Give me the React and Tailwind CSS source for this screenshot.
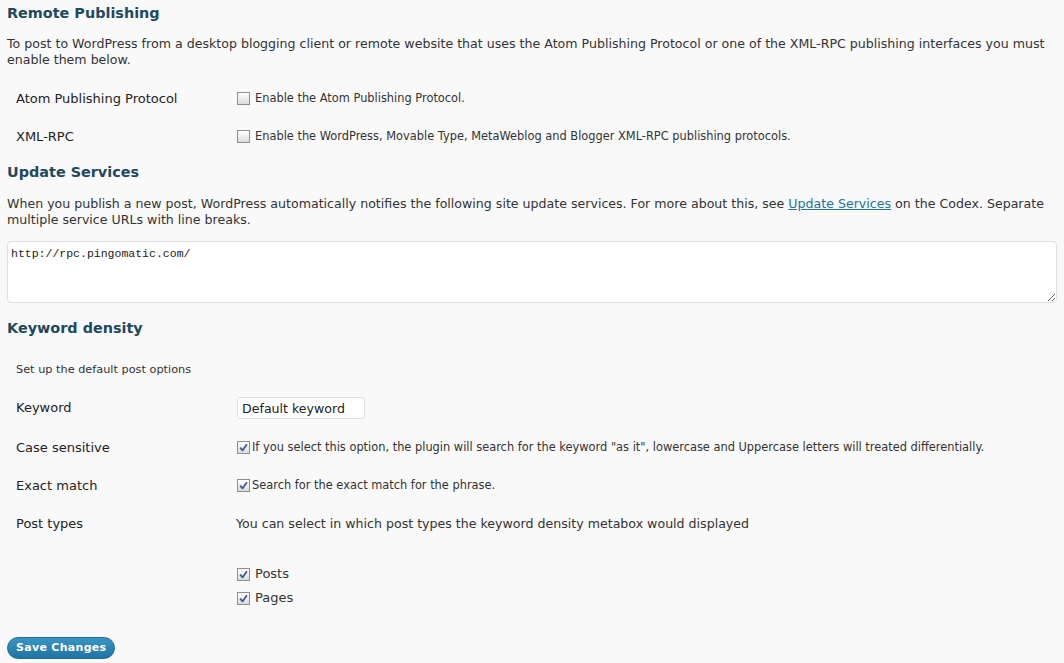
import React from "react";

const Box = ({ checked }) => (
  <span className="inline-flex h-[13px] w-[13px] shrink-0 items-center justify-center border border-[#8f8f8f] bg-gradient-to-b from-[#ffffff] to-[#dcdcdc]">
    {checked && (
      <svg width="9" height="9" viewBox="0 0 9 9">
        <path d="M1.2 4.6 L3.5 7.4 L7.9 1.2" fill="none" stroke="#3c5a9a" strokeWidth="1.8" strokeLinejoin="round" />
      </svg>
    )}
  </span>
);

const Row = ({ label, h, children }) => (
  <div className={`flex items-center pl-[9px] ${h}`}>
    <div className="w-[221px] shrink-0 text-[13px] text-[#222]">{label}</div>
    <div className="flex items-center">{children}</div>
  </div>
);

const Heading = ({ children, className = "" }) => (
  <h3 className={`text-[14.4px] font-bold leading-[20px] text-[#21495e] ${className}`}>{children}</h3>
);

export default function App() {
  return (
    <div
      className="min-h-screen bg-[#f9f9f9] px-[7px] pt-[3px] text-[#333]"
      style={{ fontFamily: '"DejaVu Sans", Verdana, sans-serif' }}
    >
      <Heading>Remote Publishing</Heading>
      <p className="mt-[13px] text-[12.6px] leading-[16px]">
        To post to WordPress from a desktop blogging client or remote website that uses the Atom Publishing Protocol or one of the XML-RPC publishing interfaces you must enable them below.
      </p>

      <div className="mt-[12px]">
        <Row label="Atom Publishing Protocol" h="h-[38px]">
          <Box />
          <span className="ml-[5px] text-[11.4px]">Enable the Atom Publishing Protocol.</span>
        </Row>
        <Row label="XML-RPC" h="h-[38px]">
          <Box />
          <span className="ml-[5px] text-[11.4px]">Enable the WordPress, Movable Type, MetaWeblog and Blogger XML-RPC publishing protocols.</span>
        </Row>
      </div>

      <Heading className="mt-[6px]">Update Services</Heading>
      <p className="mt-[14px] text-[12.6px] leading-[16px]">
        When you publish a new post, WordPress automatically notifies the following site update services. For more about this, see{" "}
        <a href="#" className="text-[#21759b] underline">Update Services</a> on the Codex. Separate multiple service URLs with line breaks.
      </p>

      <textarea
        className="mt-[13px] block h-[62px] w-full resize-y rounded-[4px] border border-[#dfdfdf] bg-white px-[3px] py-[4px] text-[11.5px] leading-[16px] text-[#222] outline-none"
        style={{ fontFamily: '"Liberation Mono", "Courier New", monospace' }}
        defaultValue="http://rpc.pingomatic.com/"
      />

      <Heading className="mt-[15px]">Keyword density</Heading>
      <p className="mt-[25px] pl-[9px] text-[11.3px] leading-[14px]">Set up the default post options</p>

      <div className="mt-[11px]">
        <Row label="Keyword" h="h-[40px]">
          <input
            className="h-[22px] w-[128px] rounded-[3px] border border-[#dfdfdf] bg-white px-[4px] text-[12.6px] text-[#222] outline-none"
            style={{ fontFamily: '"DejaVu Sans", Verdana, sans-serif' }}
            defaultValue="Default keyword"
          />
        </Row>
        <Row label="Case sensitive" h="h-[39px]">
          <Box checked />
          <span className="ml-[2px] text-[11.4px]">
            If you select this option, the plugin will search for the keyword "as it", lowercase and Uppercase letters will treated differentially.
          </span>
        </Row>
        <Row label="Exact match" h="h-[38px]">
          <Box checked />
          <span className="ml-[2px] text-[11.4px]">Search for the exact match for the phrase.</span>
        </Row>
        <Row label="Post types" h="h-[38px]">
          <span className="-ml-px text-[12.6px]">You can select in which post types the keyword density metabox would displayed</span>
        </Row>
      </div>

      <div className="mt-[19px] pl-[230px]">
        <div className="flex h-[24px] items-center">
          <Box checked />
          <span className="ml-[5px] text-[13px]">Posts</span>
        </div>
        <div className="flex h-[24px] items-center">
          <Box checked />
          <span className="ml-[5px] text-[13px]">Pages</span>
        </div>
      </div>

      <button
        type="button"
        className="mt-[27px] h-[22px] rounded-full border border-[#1f6f99] bg-gradient-to-b from-[#3a95c4] to-[#1e74a3] px-[8px] text-[11px] font-bold tracking-[0.3px] text-white"
      >
        Save Changes
      </button>
    </div>
  );
}
